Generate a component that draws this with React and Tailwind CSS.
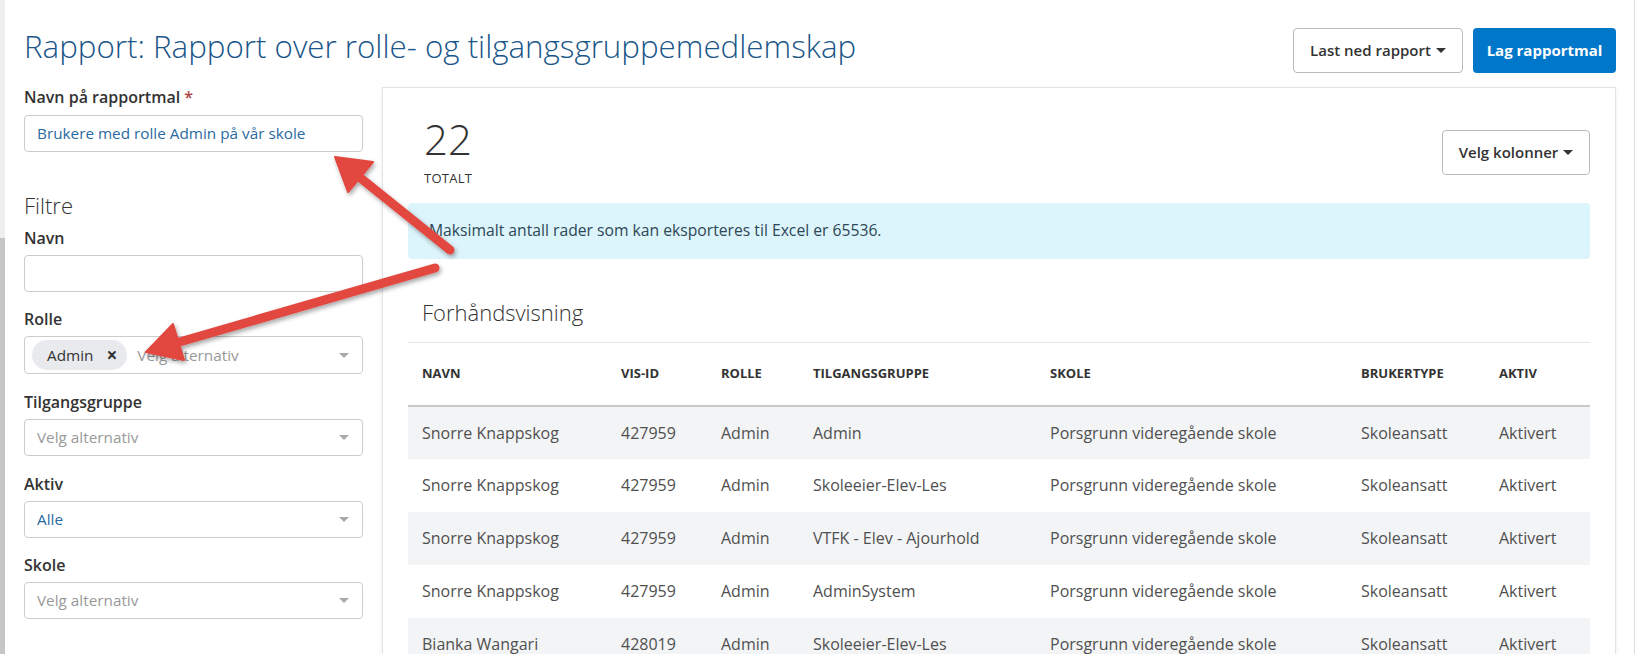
import React from 'react'

const rows = [
  ['Snorre Knappskog', '427959', 'Admin', 'Admin', 'Porsgrunn videregående skole', 'Skoleansatt', 'Aktivert'],
  ['Snorre Knappskog', '427959', 'Admin', 'Skoleeier-Elev-Les', 'Porsgrunn videregående skole', 'Skoleansatt', 'Aktivert'],
  ['Snorre Knappskog', '427959', 'Admin', 'VTFK - Elev - Ajourhold', 'Porsgrunn videregående skole', 'Skoleansatt', 'Aktivert'],
  ['Snorre Knappskog', '427959', 'Admin', 'AdminSystem', 'Porsgrunn videregående skole', 'Skoleansatt', 'Aktivert'],
  ['Bianka Wangari', '428019', 'Admin', 'Skoleeier-Elev-Les', 'Porsgrunn videregående skole', 'Skoleansatt', 'Aktivert'],
]

const columns = [
  { label: 'Navn', width: 'w-[199px]' },
  { label: 'VIS-ID', width: 'w-[100px]' },
  { label: 'Rolle', width: 'w-[92px]' },
  { label: 'Tilgangsgruppe', width: 'w-[237px]' },
  { label: 'Skole', width: 'w-[311px]' },
  { label: 'Brukertype', width: 'w-[138px]' },
  { label: 'Aktiv', width: '' },
]

function Caret({ className = 'fill-[#333]' }) {
  return (
    <svg width="10" height="5" viewBox="0 0 10 5" className={className}>
      <polygon points="0,0 10,0 5,5" />
    </svg>
  )
}

function Label({ children }) {
  return <div className="text-[16px] font-semibold leading-[20px] text-[#333]">{children}</div>
}

function Select({ value, placeholder }) {
  return (
    <div className="mt-[7px] h-[37px] rounded border border-[#ccc] flex items-center justify-between pl-[12px] pr-[13px]">
      {value ? (
        <span className="text-[15.3px] text-[#2a6aa0]">{value}</span>
      ) : (
        <span className="text-[15.3px] text-[#999]">{placeholder}</span>
      )}
      <Caret className="fill-[#aaa]" />
    </div>
  )
}

function Arrows() {
  return (
    <svg className="absolute inset-0 pointer-events-none" width="1637" height="654" viewBox="0 0 1637 654">
      <defs>
        <filter id="shadow" x="-20%" y="-20%" width="140%" height="140%">
          <feDropShadow dx="1.5" dy="2.5" stdDeviation="2" floodColor="#000" floodOpacity="0.35" />
        </filter>
      </defs>
      <g filter="url(#shadow)" fill="#e2463f" stroke="#e2463f">
        <line x1="450" y1="250" x2="358" y2="176" strokeWidth="9" strokeLinecap="round" />
        <polygon points="335,157 373,162 348,192" strokeWidth="2" strokeLinejoin="round" />
        <line x1="435" y1="268" x2="176" y2="343" strokeWidth="9" strokeLinecap="round" />
        <polygon points="146,352 173,324 184,360" strokeWidth="2" strokeLinejoin="round" />
      </g>
    </svg>
  )
}

export default function App() {
  return (
    <div className="relative flex h-[654px] w-full overflow-hidden bg-white font-['Open_Sans',sans-serif]">
      {/* left edge strip */}
      <div className="flex w-[5px] flex-col">
        <div className="h-[238px] bg-[#efefef]" />
        <div className="flex-1 bg-[#c6c6c6]" />
      </div>

      <div className="flex-1 pl-[19px] pr-[18px]">
        {/* Header */}
        <div className="flex items-start justify-between pt-[28px]">
          <h1 className="text-[31.3px] font-light leading-[36px] text-[#1a5689]">
            Rapport: Rapport over rolle- og tilgangsgruppemedlemskap
          </h1>
          <div className="flex gap-[10px]">
            <button className="flex h-[45px] w-[170px] items-center justify-center gap-[5px] rounded-sm border border-[#bbb] bg-white text-[15px] font-semibold text-[#333]">
              Last ned rapport <Caret />
            </button>
            <button className="h-[45px] w-[143px] rounded-sm bg-[#0077c8] text-[15px] font-bold text-white">
              Lag rapportmal
            </button>
          </div>
        </div>

        <div className="mt-[14px] flex gap-[19px]">
          {/* Sidebar */}
          <div className="w-[339px] shrink-0">
            <Label>
              Navn på rapportmal <span className="text-[#a94442]">*</span>
            </Label>
            <div className="mt-[8px] flex h-[37px] items-center rounded border border-[#ccc] px-[12px] text-[15.3px] text-[#2a6aa0]">
              Brukere med rolle Admin på vår skole
            </div>

            <div className="mt-[38px] text-[22px] font-light leading-[30px] text-[#333]">Filtre</div>

            <div className="mt-[8px]">
              <Label>Navn</Label>
              <div className="mt-[7px] h-[37px] rounded border border-[#ccc]" />
            </div>

            <div className="mt-[17px]">
              <Label>Rolle</Label>
              <div className="mt-[7px] flex h-[38px] items-center justify-between rounded border border-[#ccc] pl-[7px] pr-[13px]">
                <div className="flex items-center gap-[10px]">
                  <span className="flex h-[30px] items-center gap-[13px] rounded-full bg-[#e8eaed] pl-[15px] pr-[10px] text-[15.3px] text-[#333]">
                    Admin <span className="text-[19px] font-bold leading-none text-[#333]">×</span>
                  </span>
                  <span className="text-[15.3px] text-[#999]">Velg alternativ</span>
                </div>
                <Caret className="fill-[#aaa]" />
              </div>
            </div>

            <div className="mt-[18px]">
              <Label>Tilgangsgruppe</Label>
              <Select placeholder="Velg alternativ" />
            </div>

            <div className="mt-[18px]">
              <Label>Aktiv</Label>
              <Select value="Alle" />
            </div>

            <div className="mt-[17px]">
              <Label>Skole</Label>
              <Select placeholder="Velg alternativ" />
            </div>
          </div>

          {/* Report card */}
          <div className="h-[600px] flex-1 border border-[#e4e4e4] bg-white px-[25px] shadow-[0_1px_4px_rgba(0,0,0,0.08)]">
            <div className="flex items-center justify-between pt-[28px]">
              <div className="pl-[16px] text-[#333]">
                <div className="text-[42px] font-light leading-[46px]">22</div>
                <div className="mt-[7px] text-[13px] leading-[18px] tracking-[0.02em]">TOTALT</div>
              </div>
              <button className="mt-[2px] flex h-[45px] w-[148px] items-center justify-center gap-[5px] rounded-sm border border-[#bbb] bg-white text-[15px] font-semibold text-[#333]">
                Velg kolonner <Caret />
              </button>
            </div>

            <div className="mt-[16px] flex h-[56px] items-center rounded bg-[#dcf4fb] px-[21px] text-[15.7px] text-[#2d4756]">
              Maksimalt antall rader som kan eksporteres til Excel er 65536.
            </div>

            <div className="mt-[38px] pl-[14px] text-[22px] font-light leading-[30px] text-[#333]">
              Forhåndsvisning
            </div>

            <table className="mt-[15px] w-full table-fixed border-t border-[#e6e6e6] text-left">
              <thead>
                <tr className="h-[63px] border-b-2 border-[#c9c9c9]">
                  {columns.map((col) => (
                    <th
                      key={col.label}
                      className={`${col.width} px-[14px] text-[13px] font-bold uppercase text-[#333]`}
                    >
                      {col.label}
                    </th>
                  ))}
                </tr>
              </thead>
              <tbody className="text-[16px] text-[#505050]">
                {rows.map((row, i) => (
                  <tr key={i} className={`h-[53px] ${i % 2 === 0 ? 'bg-[#f3f4f6]' : 'bg-white'}`}>
                    {row.map((cell, j) => (
                      <td key={j} className="px-[14px] whitespace-nowrap">
                        {cell}
                      </td>
                    ))}
                  </tr>
                ))}
              </tbody>
            </table>
          </div>
        </div>
      </div>

      {/* right edge line */}
      <div className="w-[3px] border-l border-[#dcdcdc]" />

      <Arrows />
    </div>
  )
}
